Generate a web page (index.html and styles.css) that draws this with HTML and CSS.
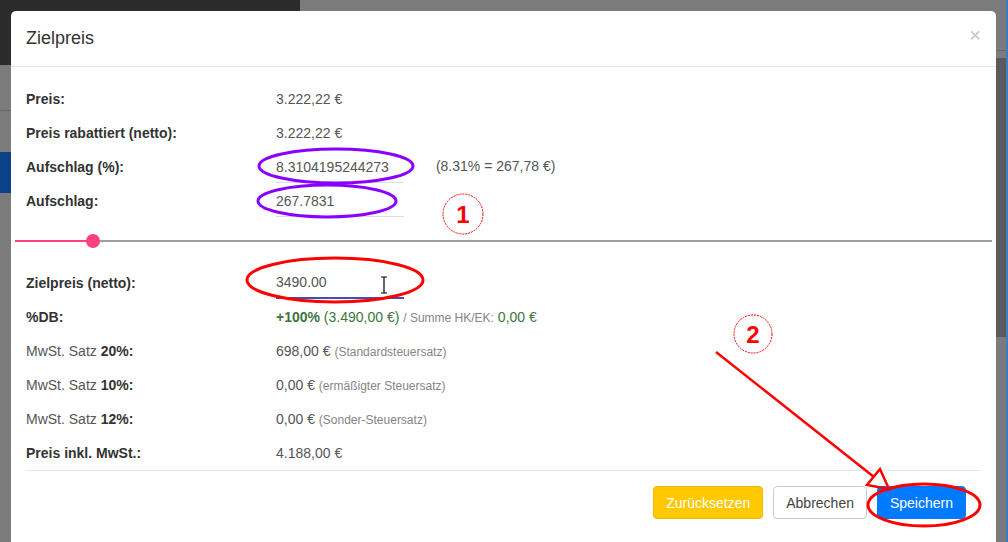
FILE: index.html
```html
<!DOCTYPE html>
<html lang="de">
<head>
  <meta charset="UTF-8">
  <title>Zielpreis</title>
  <link rel="stylesheet" href="styles.css">
</head>
<body>
  <div class="modal">
    <div class="modal-header">
      <h4 class="modal-title">Zielpreis</h4>
      <span class="close">&times;</span>
    </div>

    <div class="modal-body">
      <div class="row">
        <div class="label">Preis:</div>
        <div class="value">3.222,22 €</div>
      </div>
      <div class="row">
        <div class="label">Preis rabattiert (netto):</div>
        <div class="value">3.222,22 €</div>
      </div>
      <div class="row">
        <div class="label">Aufschlag (%):</div>
        <div class="value">
          <input class="field" type="text" value="8.3104195244273">
          <span class="hint">(8.31% = 267,78 €)</span>
        </div>
      </div>
      <div class="row">
        <div class="label">Aufschlag:</div>
        <div class="value"><input class="field" type="text" value="267.7831"></div>
      </div>

      <!-- Schieberegler -->
      <div class="slider">
        <div class="track">
          <div class="fill"></div>
          <div class="thumb"></div>
        </div>
      </div>

      <div class="row">
        <div class="label">Zielpreis (netto):</div>
        <div class="value"><input class="field focused" type="text" value="3490.00"></div>
      </div>
      <div class="row">
        <div class="label">%DB:</div>
        <div class="value"><span class="good"><b>+100%</b> (3.490,00 €)</span> <span class="note">/ Summe HK/EK:</span> <span class="good">0,00 €</span></div>
      </div>
      <div class="row">
        <div class="label light">MwSt. Satz <b>20%:</b></div>
        <div class="value">698,00 € <span class="note">(Standardsteuersatz)</span></div>
      </div>
      <div class="row">
        <div class="label light">MwSt. Satz <b>10%:</b></div>
        <div class="value">0,00 € <span class="note">(ermäßigter Steuersatz)</span></div>
      </div>
      <div class="row">
        <div class="label light">MwSt. Satz <b>12%:</b></div>
        <div class="value">0,00 € <span class="note">(Sonder-Steuersatz)</span></div>
      </div>
      <div class="row">
        <div class="label">Preis inkl. MwSt.:</div>
        <div class="value">4.188,00 €</div>
      </div>
    </div>

    <div class="modal-footer">
      <button class="btn btn-warning">Zurücksetzen</button>
      <button class="btn btn-default">Abbrechen</button>
      <button class="btn btn-primary">Speichern</button>
    </div>
  </div>

  <!-- Markierungen über dem Dialog -->
  <svg class="marks" width="1008" height="542" viewBox="0 0 1008 542">
    <ellipse cx="336" cy="166" rx="77" ry="17" fill="none" stroke="#8a00ff" stroke-width="3"/>
    <ellipse cx="327" cy="201" rx="69" ry="16" fill="none" stroke="#8a00ff" stroke-width="3"/>
    <ellipse cx="335" cy="280" rx="88" ry="22" fill="none" stroke="#ff0000" stroke-width="3"/>
    <ellipse cx="924" cy="505" rx="56" ry="21" fill="none" stroke="#ff0000" stroke-width="3"/>

    <circle cx="463" cy="214" r="20" fill="none" stroke="#ff0000" stroke-width="1" stroke-dasharray="2 1"/>
    <text x="463" y="223" class="num">1</text>
    <circle cx="753" cy="334" r="19" fill="none" stroke="#ff0000" stroke-width="1" stroke-dasharray="2 1"/>
    <text x="753" y="343" class="num">2</text>

    <line x1="716" y1="352" x2="874" y2="477" stroke="#ff0000" stroke-width="2.5"/>
    <polygon points="880,469 867,485 889,489" fill="none" stroke="#ff0000" stroke-width="2.5"/>

    <!-- Textcursor -->
    <path d="M381 277h6M384 277v16M381 293h6" stroke="#000" stroke-width="1.2" fill="none"/>
  </svg>
</body>
</html>
```

FILE: styles.css
```css
body {
  margin: 0;
  width: 1008px;
  height: 542px;
  overflow: hidden;
  position: relative;
  font-family: 'Liberation Sans', Arial, sans-serif;
  font-size: 14px;
  color: #333;
  background:
    linear-gradient(#2b2b2b, #2b2b2b) 0 0 / 300px 65px no-repeat,
    linear-gradient(#0b4287, #0b4287) 0 152px / 12px 41px no-repeat,
    linear-gradient(#666, #666) 0 110px / 12px 1px no-repeat,
    linear-gradient(#3b7dc4, #3b7dc4) 1006px 0 / 2px 542px no-repeat,
    linear-gradient(#5a5a5a, #5a5a5a) 996px 58px / 10px 279px no-repeat,
    linear-gradient(#666, #666) 996px 50px / 10px 1px no-repeat,
    #7b7b7b;
}

.modal {
  margin: 11px 0 0 11px;
  width: 985px;
  background: #fff;
  border-radius: 5px 5px 0 0;
  padding-bottom: 8px;
}

.modal-header {
  height: 55px;
  padding: 0 15px;
  display: flex;
  align-items: center;
  justify-content: space-between;
  border-bottom: 1px solid #e5e5e5;
}

.modal-title {
  margin: 0;
  font-size: 18px;
  font-weight: normal;
  color: #333;
}

.close {
  font-size: 20px;
  color: #c4c4c4;
  margin-top: -6px;
}

.modal-body {
  padding: 15px 15px 0;
}

.row {
  display: flex;
  align-items: center;
  height: 34px;
}

.label {
  width: 250px;
  font-weight: bold;
  color: #333;
}

.label.light {
  font-weight: normal;
  color: #555;
}

.label b {
  color: #333;
}

.value {
  color: #555;
}

.field {
  box-sizing: border-box;
  width: 128px;
  height: 31px;
  padding: 0;
  border: none;
  border-bottom: 1px solid #ddd;
  background: transparent;
  font-family: inherit;
  font-size: 14px;
  color: #555;
  outline: none;
  vertical-align: middle;
}

.field.focused {
  height: 32px;
  border-bottom: 2px solid #3f51b5;
}

.hint {
  margin-left: 28px;
  color: #555;
}

.good {
  color: #3c763d;
}

.note {
  font-size: 12px;
  color: #858585;
}

.slider {
  margin: 0 -11px;
  padding: 22px 0 24px;
}

.track {
  position: relative;
  height: 2px;
  background: #9e9e9e;
}

.fill {
  width: 78px;
  height: 2px;
  background: #ff4081;
}

.thumb {
  position: absolute;
  left: 71px;
  top: -6px;
  width: 14px;
  height: 14px;
  border-radius: 50%;
  background: #ff4081;
}

.modal-footer {
  margin: 0 15px;
  padding: 15px 15px;
  border-top: 1px solid #e5e5e5;
  display: flex;
  justify-content: flex-end;
  gap: 10px;
}

.btn {
  height: 33px;
  padding: 0 12px;
  border: 1px solid transparent;
  border-radius: 4px;
  font-family: inherit;
  font-size: 14px;
}

.btn-warning {
  background: #ffc800;
  border-color: #efb900;
  color: #fff;
}

.btn-default {
  background: #fff;
  border-color: #ccc;
  color: #444;
}

.btn-primary {
  background: #007bff;
  border-color: #007bff;
  color: #fff;
}

.marks {
  position: absolute;
  top: 0;
  left: 0;
  pointer-events: none;
}

.num {
  font-family: 'Liberation Sans', Arial, sans-serif;
  font-size: 24px;
  font-weight: bold;
  fill: #ff0000;
  text-anchor: middle;
}
```
